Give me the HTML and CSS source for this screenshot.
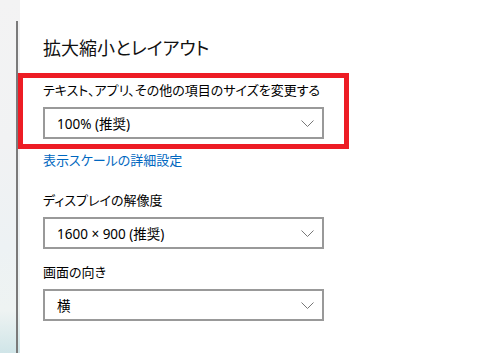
FILE: index.html
```html
<!DOCTYPE html>
<html lang="ja">
<head>
    <meta charset="UTF-8">
    <meta name="viewport" content="width=device-width, initial-scale=1.0">
    <title>拡大縮小とレイアウト</title>
    <link rel="stylesheet" href="styles.css">
</head>
<body>
    <div class="window">
        <div class="rail">
            <div class="rail-line"></div>
        </div>

        <div class="settings">
            <h1 class="title">拡大縮小とレイアウト</h1>

            <div class="highlight">
                <div class="label">テキスト、アプリ、その他の項目のサイズを変更する</div>
                <div class="select">
                    <span>100% (推奨)</span>
                    <svg class="chevron" viewBox="0 0 13 7" width="13" height="7">
                        <path d="M0.5 0.5L6.5 6.5L12.5 0.5" fill="none" stroke="currentColor" stroke-width="1"/>
                    </svg>
                </div>
            </div>

            <a class="link" href="#">表示スケールの詳細設定</a>

            <div class="group">
                <div class="label">ディスプレイの解像度</div>
                <div class="select">
                    <span>1600 × 900 (推奨)</span>
                    <svg class="chevron" viewBox="0 0 13 7" width="13" height="7">
                        <path d="M0.5 0.5L6.5 6.5L12.5 0.5" fill="none" stroke="currentColor" stroke-width="1"/>
                    </svg>
                </div>
            </div>

            <div class="group group-tight">
                <div class="label">画面の向き</div>
                <div class="select">
                    <span>横</span>
                    <svg class="chevron" viewBox="0 0 13 7" width="13" height="7">
                        <path d="M0.5 0.5L6.5 6.5L12.5 0.5" fill="none" stroke="currentColor" stroke-width="1"/>
                    </svg>
                </div>
            </div>
        </div>
    </div>
</body>
</html>
```

FILE: styles.css
```css
/* Base styling */
body {
    font-family: 'Noto Sans', 'Noto Sans CJK JP', sans-serif;
    font-feature-settings: "palt";
    background-color: #fff;
    margin: 0;
    padding: 0;
    color: #000;
}

.window {
    display: flex;
    height: 353px;
    overflow: hidden;
}

/* Window behind, only its edge shows */
.rail {
    width: 20px;
    flex-shrink: 0;
    background: linear-gradient(#f3f3f3 0%, #f1f2f3 40%, #edf2f4 70%, #eef3f2 88%, #d0e5e8 100%);
}

.rail-line {
    margin: 21px 0 0 16px;
    width: 2px;
    height: 332px;
    background-color: #7a7a7a;
}

.settings {
    display: flex;
    flex-direction: column;
    align-items: flex-start;
    padding: 34px 0 0 23px;
}

.title {
    margin: 0;
    font-size: 18px;
    font-weight: normal;
    line-height: 28px;
    color: #111;
}

.label {
    font-size: 13px;
    line-height: 20px;
}

/* Red annotation box */
.highlight {
    margin: 11px 0 0 -25px;
    width: 301px;
    padding: 2px 0 5px 20px;
    border: 5px solid #ed1c24;
}

.select {
    display: flex;
    align-items: center;
    justify-content: space-between;
    box-sizing: border-box;
    width: 281px;
    height: 32px;
    margin-top: 7px;
    padding: 0 8px 0 12px;
    border: 2px solid #999;
    font-size: 13.5px;
}

.chevron {
    color: #777;
}

.link {
    margin-top: 1px;
    font-size: 13px;
    line-height: 20px;
    color: #0067c0;
    text-decoration: none;
}

.group {
    margin-top: 20px;
}

.group-tight {
    margin-top: 13px;
}
```
